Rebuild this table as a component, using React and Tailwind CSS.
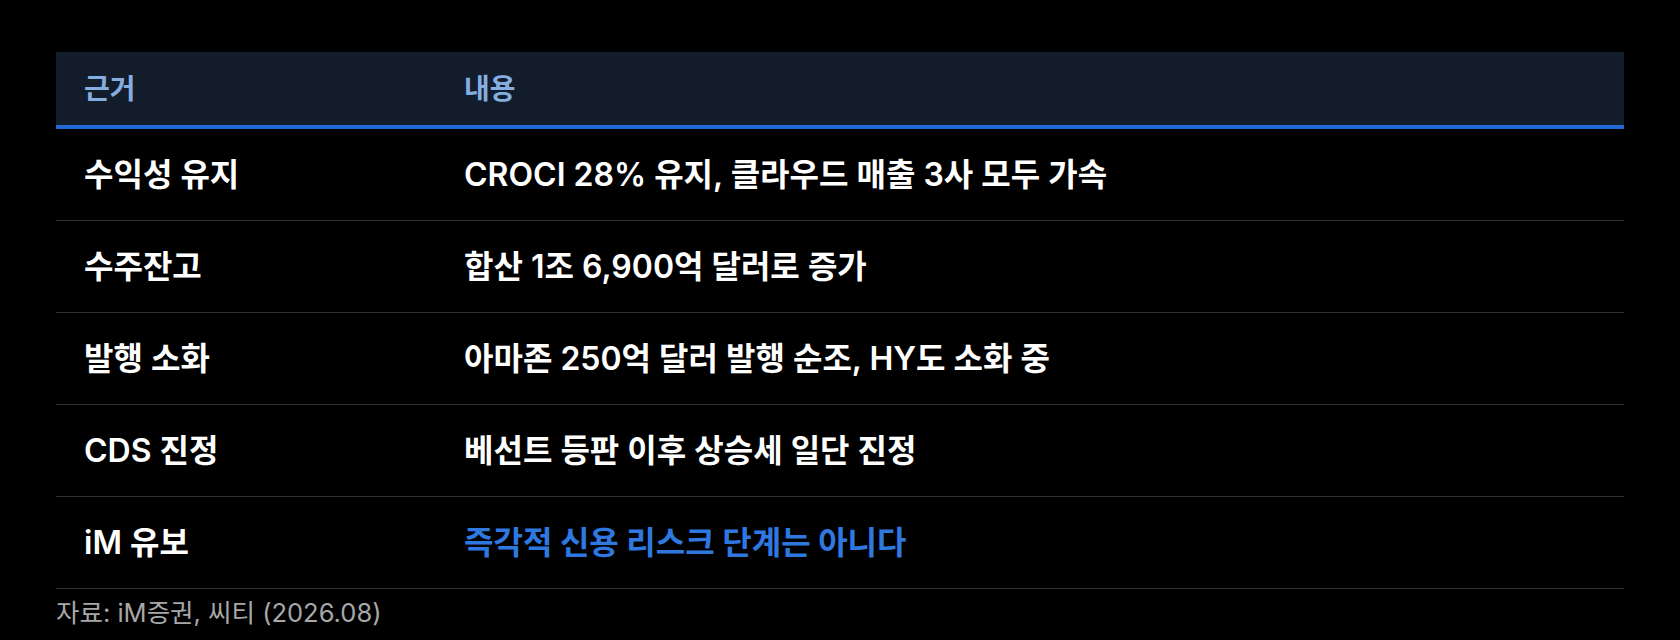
const rows = [
  { k: "수익성 유지", v: "CROCI 28% 유지, 클라우드 매출 3사 모두 가속" },
  { k: "수주잔고", v: "합산 1조 6,900억 달러로 증가" },
  { k: "발행 소화", v: "아마존 250억 달러 발행 순조, HY도 소화 중" },
  { k: "CDS 진정", v: "베선트 등판 이후 상승세 일단 진정" },
  { k: "iM 유보", v: "즉각적 신용 리스크 단계는 아니다", hl: true },
];

export default function App() {
  return (
    <div
      className="min-h-[640px] bg-black px-[56px] pt-[52px]"
      style={{ fontFamily: '"Inter", "Noto Sans CJK KR", sans-serif' }}
    >
      <div className="grid grid-cols-[408px_1fr] h-[77px] items-center bg-[#131c2b] border-b-4 border-[#2269d8] text-[28px] font-bold text-[#85aee0]">
        <div className="pl-[28px]">근거</div>
        <div>내용</div>
      </div>
      {rows.map((r) => (
        <div
          key={r.k}
          className="grid grid-cols-[408px_1fr] h-[92px] items-center border-b border-[#333333] text-[32px]"
        >
          <div className="pl-[28px] font-semibold text-white">{r.k}</div>
          <div className={r.hl ? "font-bold text-[#2e78e0]" : "font-semibold text-white"}>{r.v}</div>
        </div>
      ))}
      <div className="mt-[6px] text-[25.5px] leading-[36px] text-[#a8a8a8]">자료: iM증권, 씨티 (2026.08)</div>
    </div>
  );
}
